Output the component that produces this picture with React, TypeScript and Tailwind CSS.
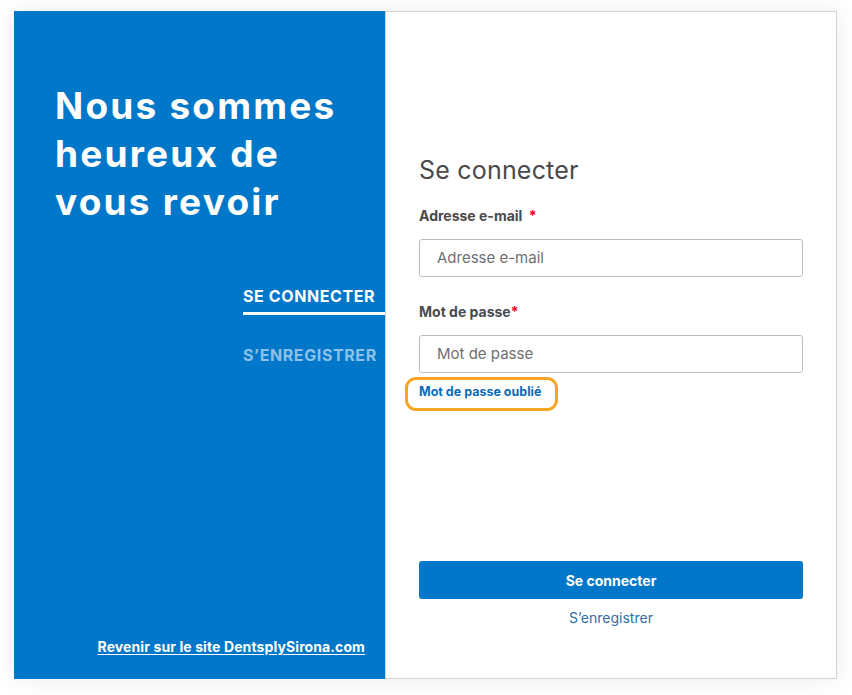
import React from "react";

export default function App() {
  const font = { fontFamily: "Inter, 'Open Sans', sans-serif" };
  return (
    <div className="w-[852px] h-[695px] bg-white" style={font}>
      <div className="pt-[11px] pl-[14px]">
        <div className="flex w-[823px] h-[668px] border border-[#d2d2d2] border-l-0 shadow-[0_0_24px_rgba(0,0,0,0.08)]">
          <div className="w-[371px] -mt-px -mb-px h-[668px] bg-[#0077c8] flex flex-col">
            <h1 className="pl-[41px] pt-[71px] text-[37px] leading-[48px] font-bold text-white tracking-[2.2px]">
              Nous sommes
              <br />
              heureux de
              <br />
              vous revoir
            </h1>
            <div className="flex flex-col items-start pl-[229px] mt-[58px]">
              <div className="w-full border-b-[3px] border-white pb-[4px]">
                <span className="text-[16px] font-bold text-white tracking-[0.6px]">SE CONNECTER</span>
              </div>
              <span className="mt-[28px] text-[16px] font-bold text-[#8cc1ea] tracking-[0.6px]">S’ENREGISTRER</span>
            </div>
            <div className="flex-1" />
            <div className="flex justify-end pr-[20px] pb-[22px]">
              <a className="text-[14px] font-bold text-white underline underline-offset-2 tracking-[0.1px]">
                Revenir sur le site DentsplySirona.com
              </a>
            </div>
          </div>
          <div className="flex-1 border-l border-[#d2d2d2] bg-white flex flex-col px-[33px]">
            <h2 className="mt-[143px] text-[25px] text-[#4a4a4a] leading-[30px] tracking-[0.2px]">Se connecter</h2>
            <label className="mt-[20px] text-[14px] font-bold text-[#4a4a4a]">
              Adresse e-mail <span className="text-[#e4002b] ml-[3px]">*</span>
            </label>
            <div className="mt-[13px] h-[38px] border border-[#bdbdbd] rounded-[3px] flex items-center px-[17px] text-[15px] text-[#6f6f6f]">
              Adresse e-mail
            </div>
            <label className="mt-[24px] text-[14px] font-bold text-[#4a4a4a]">
              Mot de passe<span className="text-[#e4002b]">*</span>
            </label>
            <div className="mt-[13px] h-[38px] border border-[#bdbdbd] rounded-[3px] flex items-center px-[17px] text-[15px] text-[#6f6f6f]">
              Mot de passe
            </div>
            <div className="-ml-[14px] mt-[4px] w-[153px] h-[34px] border-[3px] border-[#f6a623] rounded-[11px] flex items-start pt-[3px] pl-[11px]">
              <a className="text-[12.5px] font-bold text-[#0b6cb9]">Mot de passe oublié</a>
            </div>
            <div className="flex-1" />
            <button className="h-[38px] rounded-[3px] bg-[#0077c8] text-white text-[14px] font-bold">
              Se connecter
            </button>
            <div className="mt-[9px] mb-[50px] text-center text-[14px] leading-[20px] text-[#2f6da8]">S’enregistrer</div>
          </div>
        </div>
      </div>
    </div>
  );
}
